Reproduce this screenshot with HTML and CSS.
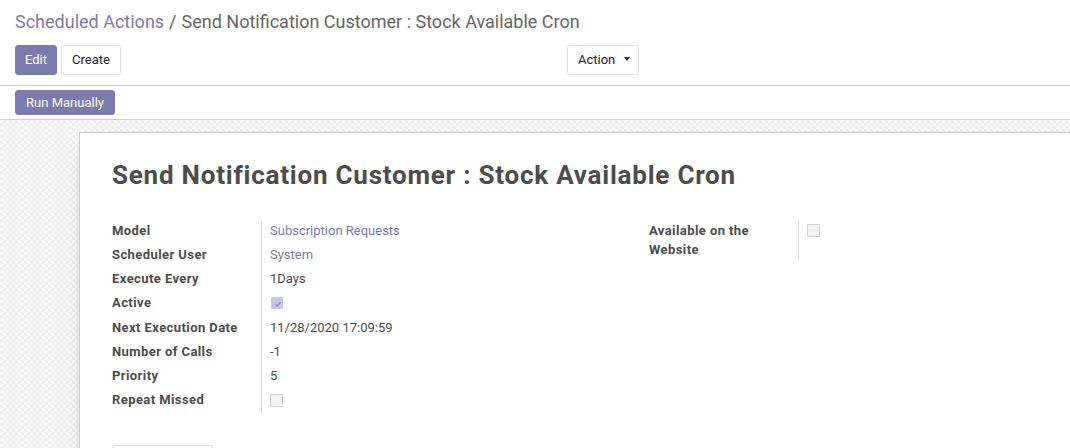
FILE: index.html
```html
<!DOCTYPE html>
<html>
<head>
<meta charset="utf-8">
<link rel="stylesheet" href="styles.css">
</head>
<body>
<div class="app">
  <div class="control-panel">
    <ol class="breadcrumb">
      <li class="crumb-link">Scheduled Actions</li>
      <li class="crumb-sep">/</li>
      <li class="crumb-active">Send Notification Customer : Stock Available Cron</li>
    </ol>
    <div class="cp-buttons">
      <div class="cp-left">
        <button class="btn btn-primary btn-edit">Edit</button>
        <button class="btn btn-secondary">Create</button>
      </div>
      <div class="cp-mid">
        <button class="btn btn-secondary btn-action">Action <span class="caret"></span></button>
      </div>
    </div>
  </div>
  <div class="statusbar">
    <button class="btn btn-primary btn-sm">Run Manually</button>
  </div>
  <div class="form-bg">
    <div class="sheet">
      <h1 class="title">Send Notification Customer : Stock Available Cron</h1>
      <div class="groups">
        <div class="group">
          <div class="row"><div class="label">Model</div><div class="value link">Subscription Requests</div></div>
          <div class="row"><div class="label">Scheduler User</div><div class="value link">System</div></div>
          <div class="row"><div class="label">Execute Every</div><div class="value">1Days</div></div>
          <div class="row"><div class="label">Active</div><div class="value"><span class="cb cb-checked"><svg viewBox="0 0 12 12" width="12" height="12"><path d="M3.5 6.3 L5.2 8 L8.6 4.3" fill="none" stroke="#8f8dbd" stroke-width="1.4"/></svg></span></div></div>
          <div class="row row-date"><div class="label">Next Execution Date</div><div class="value">11/28/2020 17:09:59</div></div>
          <div class="row"><div class="label">Number of Calls</div><div class="value">-1</div></div>
          <div class="row"><div class="label">Priority</div><div class="value">5</div></div>
          <div class="row"><div class="label">Repeat Missed</div><div class="value"><span class="cb"></span></div></div>
        </div>
        <div class="group">
          <div class="row"><div class="label">Available on the Website</div><div class="value value-cb"><span class="cb"></span></div></div>
        </div>
      </div>
      <div class="notebook">
        <div class="tab"></div>
      </div>
    </div>
  </div>
</div>
</body>
</html>
```
FILE: styles.css
```css
* { box-sizing: border-box; }
html, body { margin: 0; padding: 0; }
body {
  font-family: Roboto, "Liberation Sans", Arial, sans-serif;
  font-size: 13px;
  color: #4c4c4c;
  background: #fff;
  width: 1070px;
  height: 448px;
  overflow: hidden;
}
.app { display: flex; flex-direction: column; height: 448px; }
.control-panel {
  padding: 10px 15px 10px 15px;
  border-bottom: 1px solid #cccccc;
  height: 86px;
}
.breadcrumb {
  list-style: none;
  margin: 0;
  padding: 0;
  display: flex;
  font-size: 18px;
  line-height: 24px;
  height: 26px;
  margin-bottom: 9px;
}
.crumb-link { color: #7c7bad; }
.crumb-sep { color: #666; padding: 0 5px 0 5px; }
.crumb-active { color: #666; }
.cp-buttons { display: flex; }
.cp-left { display: flex; gap: 4px; width: 552px; }
.btn {
  font-family: Roboto, "Liberation Sans", Arial, sans-serif;
  font-size: 13px;
  height: 30px;
  padding: 0 10px;
  border-radius: 3px;
  border: 1px solid transparent;
  cursor: pointer;
  line-height: 28px;
}
.btn-primary { background: #7c7bad; color: #fff; border-color: #7c7bad; }
.btn-secondary { background: #fff; color: #212529; border-color: #dee2e6; }
.btn-edit { width: 42px; padding: 0; }
.btn-action { width: 72px; padding: 0 0 0 10px; text-align: left; }
.caret {
  display: inline-block;
  width: 0; height: 0;
  margin-left: 5px;
  vertical-align: 3px;
  border-top: 4px solid #333;
  border-left: 3.5px solid transparent;
  border-right: 3.5px solid transparent;
}
.statusbar {
  height: 34px;
  padding: 4px 15px 0;
  border-bottom: 1px solid #cfcfd4;
}
.btn-sm { height: 25px; line-height: 23px; padding: 0 10px; width: 100px; }
.form-bg {
  flex: 1;
  background-color: #f6f6f6;
  background-image: conic-gradient(#efeff0 25%, #fafafa 0 50%, #efeff0 0 75%, #fafafa 0);
  background-size: 6px 6px;
  padding: 12px 0 0 79px;
  overflow: hidden;
}
.sheet {
  width: 1140px;
  min-height: 400px;
  background: #fff;
  border: 1px solid #c9c9d1;
  box-shadow: 0 5px 20px -15px #000;
  padding: 22px 32px 0 32px;
}
.title {
  margin: 0 0 26px;
  font-size: 26px;
  font-weight: 700;
  line-height: 40px;
  letter-spacing: 0.78px;
  color: #4c4c4c;
}
.groups { display: grid; grid-template-columns: 505px 505px; column-gap: 32px; }
.group { display: flex; flex-direction: column; }
.row { display: flex; min-height: 24px; }
.row-date { min-height: 25px; }
.row-date .label, .row-date .value { padding-top: 1px; }
.label {
  width: 150px;
  flex: none;
  font-weight: 700;
  line-height: 19px;
  letter-spacing: 0.42px;
  border-right: 1px solid #dcdcdc;
  padding-right: 20px;
}
.value { padding-left: 8px; line-height: 19px; color: #4c4c4c; }
.link { color: #7c7bad; }
.cb {
  display: inline-block;
  width: 13px;
  height: 13px;
  margin-top: 4px;
  border: 1px solid #d1d1d1;
  background: #f3f3f3;
  border-radius: 1px;
  vertical-align: top;
}
.cb svg { display: block; margin: -0.5px 0 0 -0.5px; }
.cb-checked { background: #c8c7e0; border-color: #c8c7e0; width: 12px; height: 12px; margin-left: 1px; }
.value-cb .cb { margin-top: 3px; }
.notebook { margin-top: 31px; }
.tab {
  width: 101px;
  height: 20px;
  border: 1px solid #dee2e6;
  border-bottom: none;
  border-radius: 3px 3px 0 0;
}
```
